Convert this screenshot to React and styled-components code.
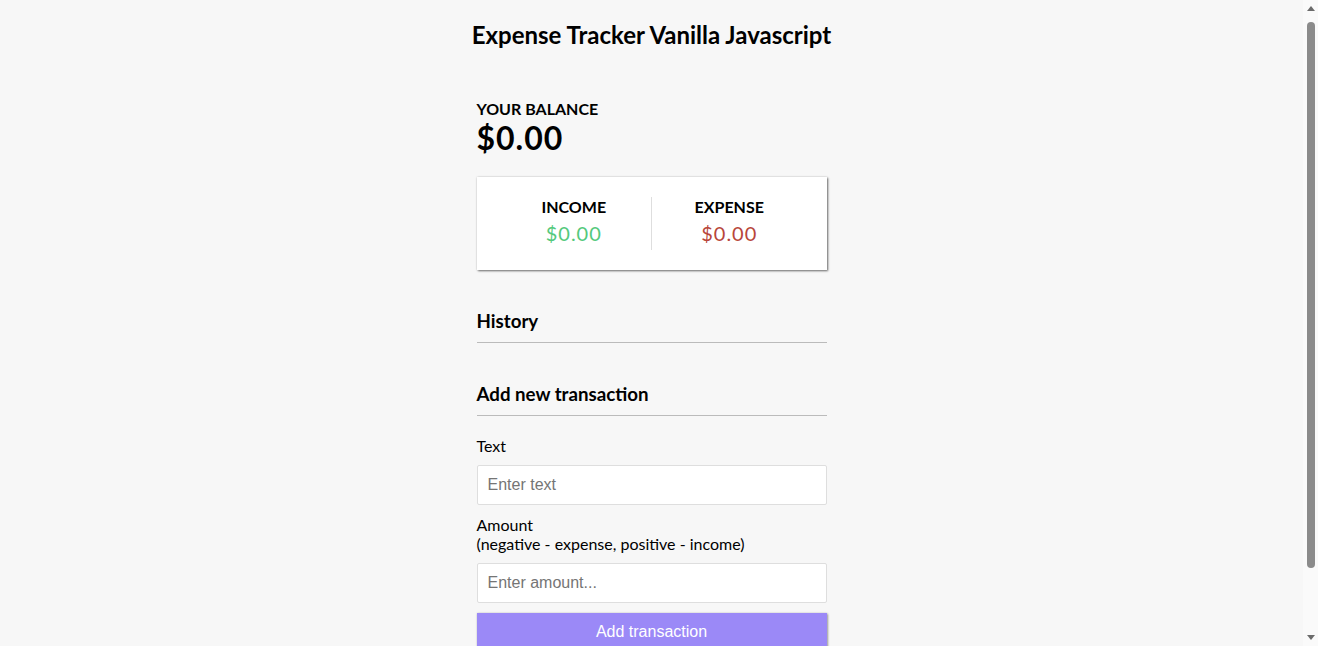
import React, { useState } from 'react';
import styled, { createGlobalStyle } from 'styled-components';

const GlobalStyle = createGlobalStyle`
  * {
    box-sizing: border-box;
  }
  body {
    margin: 0;
    background-color: #f7f7f7;
    font-family: 'Lato', 'Open Sans', sans-serif;
  }
`;

// leaves room for the classic 15px scrollbar drawn on the right
const Page = styled.div`
  display: flex;
  flex-direction: column;
  align-items: center;
  justify-content: center;
  min-height: 100vh;
  padding-right: 15px;
`;

const ScrollRail = styled.div`
  position: fixed;
  top: 0;
  right: 0;
  bottom: 0;
  width: 15px;
  background: #fafafa;
  display: flex;
  flex-direction: column;
  align-items: center;
`;

const Arrow = styled.div`
  height: 17px;
  flex: none;
  display: flex;
  align-items: center;
  justify-content: center;
  &::after {
    content: '';
    border-left: 4px solid transparent;
    border-right: 4px solid transparent;
    ${p =>
      p.$down
        ? 'border-top: 5px solid #6b6b6b;'
        : 'border-bottom: 5px solid #6b6b6b;'}
  }
`;

const ThumbTrack = styled.div`
  flex: 1;
  width: 100%;
  display: flex;
  justify-content: center;
  padding-top: 5px;
`;

const Thumb = styled.div`
  width: 8px;
  height: 546px;
  border-radius: 4px;
  background: #8b8b8b;
`;

const Title = styled.h2`
  font-size: 24px;
  font-weight: 700;
  margin: 19.92px 0;
`;

const Container = styled.div`
  margin: 30px auto;
  width: 350px;
`;

const Caption = styled.h4`
  margin: 0;
  font-size: 16px;
  text-transform: uppercase;
`;

const Balance = styled.h1`
  margin: 0;
  font-size: 32px;
  letter-spacing: 1px;
`;

const IncExp = styled.div`
  background-color: #fff;
  box-shadow: 0 0 2px rgba(0, 0, 0, 0.15), 1px 1px 2px rgba(0, 0, 0, 0.55);
  padding: 20px;
  display: flex;
  justify-content: space-between;
  margin: 20px 0;
`;

const IncExpCol = styled.div`
  flex: 1;
  text-align: center;
  &:first-of-type {
    border-right: 1px solid #dedede;
  }
`;

const Money = styled.p`
  font-size: 20px;
  letter-spacing: 1px;
  margin: 5px 0;
  color: ${p => (p.$minus ? '#b8463a' : '#54c97c')};
`;

const SectionTitle = styled.h3`
  font-size: 18.72px;
  border-bottom: 1px solid #bbb;
  padding-bottom: 10px;
  margin: 40px 0 10px;
`;

const List = styled.ul`
  list-style-type: none;
  padding: 0;
  margin: 16px 0 40px;
`;

const FormControl = styled.div``;

const Label = styled.label`
  display: inline-block;
  margin: 10px 0;
  font-size: 16px;
`;

const Input = styled.input`
  border: 1px solid #dedede;
  border-radius: 2px;
  display: block;
  font-family: 'Liberation Sans', Arial, sans-serif;
  font-size: 16px;
  padding: 10px;
  width: 100%;
  background: #fff;
  &::placeholder {
    color: #757575;
  }
`;

const Button = styled.button`
  cursor: pointer;
  background-color: #9b89f7;
  box-shadow: 0 0 2px rgba(0, 0, 0, 0.15), 1px 1px 2px rgba(0, 0, 0, 0.35);
  color: #fff;
  border: 0;
  display: block;
  font-family: 'Liberation Sans', Arial, sans-serif;
  font-size: 16px;
  margin: 10px 0 30px;
  padding: 10px;
  width: 100%;
`;

export default function App() {
  const [text, setText] = useState('');
  const [amount, setAmount] = useState('');

  return (
    <>
      <GlobalStyle />
      <Page>
        <Title>Expense Tracker Vanilla Javascript</Title>
        <Container>
          <Caption>Your Balance</Caption>
          <Balance>$0.00</Balance>

          <IncExp>
            <IncExpCol>
              <Caption>Income</Caption>
              <Money>$0.00</Money>
            </IncExpCol>
            <IncExpCol>
              <Caption>Expense</Caption>
              <Money $minus>$0.00</Money>
            </IncExpCol>
          </IncExp>

          <SectionTitle>History</SectionTitle>
          <List />

          <SectionTitle>Add new transaction</SectionTitle>
          <form onSubmit={e => e.preventDefault()}>
            <FormControl>
              <Label htmlFor="text">Text</Label>
              <Input
                type="text"
                id="text"
                placeholder="Enter text"
                value={text}
                onChange={e => setText(e.target.value)}
              />
            </FormControl>
            <FormControl>
              <Label htmlFor="amount">
                Amount <br />
                (negative - expense, positive - income)
              </Label>
              <Input
                type="text"
                id="amount"
                placeholder="Enter amount..."
                value={amount}
                onChange={e => setAmount(e.target.value)}
              />
            </FormControl>
            <Button type="submit">Add transaction</Button>
          </form>
        </Container>
      </Page>
      <ScrollRail>
        <Arrow />
        <ThumbTrack>
          <Thumb />
        </ThumbTrack>
        <Arrow $down />
      </ScrollRail>
    </>
  );
}
